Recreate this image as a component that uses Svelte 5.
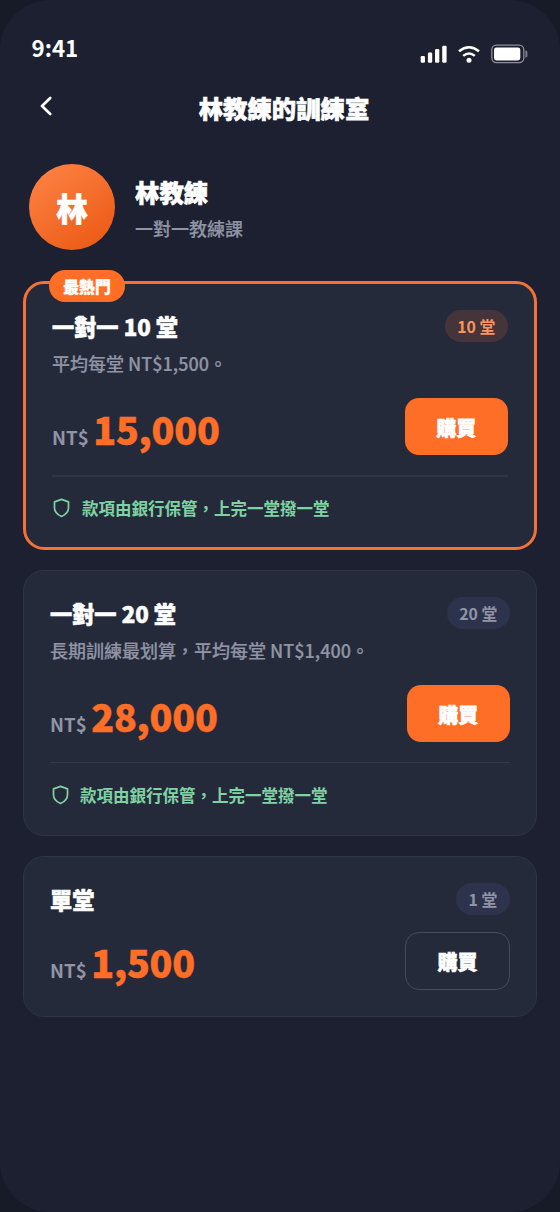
<script>
  const plans = [
    { title: '一對一 10 堂', count: '10 堂', desc: '平均每堂 NT$1,500。', price: '15,000', safe: true, hot: true },
    { title: '一對一 20 堂', count: '20 堂', desc: '長期訓練最划算，平均每堂 NT$1,400。', price: '28,000', safe: true },
    { title: '單堂', count: '1 堂', price: '1,500', outline: true }
  ];
</script>

<main class="screen" lang="zh-Hant">
  <div class="status">
    <span class="time">9:41</span>
    <div class="signals">
      <svg class="cell" width="27" height="18" viewBox="0 0 27 18" fill="#fff">
        <rect x="0.7" y="11" width="4.3" height="6.8" rx="1.2" />
        <rect x="7.9" y="7.6" width="4.3" height="10.2" rx="1.2" />
        <rect x="15" y="4" width="4.3" height="13.8" rx="1.2" />
        <rect x="22.2" y="0.8" width="4.4" height="17" rx="1.2" />
      </svg>
      <svg class="wifi" width="22" height="18" viewBox="0 0 22 18" fill="none" stroke="#fff" stroke-width="2.5">
        <path d="M1 6.3Q11-1.8 21 6.3" />
        <path d="M5.2 10.9Q11 6 16.8 10.9" />
        <circle cx="11" cy="15.2" r="2.5" fill="#fff" stroke="none" />
      </svg>
      <svg class="battery" width="37" height="20" viewBox="0 0 37 20">
        <rect x="0.8" y="1.2" width="32" height="17.4" rx="4.5" fill="none" stroke="#8c8f9a" stroke-width="1.3" />
        <rect x="3" y="3.4" width="26.3" height="13" rx="2.4" fill="#fff" />
        <path d="M34.3 6.5h.6q1.5 0 1.5 1.5v4q0 1.5-1.5 1.5h-.6z" fill="#777a86" />
      </svg>
    </div>
  </div>

  <header class="nav">
    <button class="back" aria-label="返回">
      <svg width="12" height="20" viewBox="0 0 12 20" fill="none" stroke="#fff" stroke-width="2.7" stroke-linecap="round" stroke-linejoin="round"><path d="M10.2 2L2 10l8.2 8" /></svg>
    </button>
    <h1>林教練的訓練室</h1>
  </header>

  <section class="coach">
    <div class="avatar">林</div>
    <div class="who">
      <div class="name">林教練</div>
      <div class="role">一對一教練課</div>
    </div>
  </section>

  <section class="plans">
    {#each plans as p}
      <article class="card" class:hot={p.hot} class:single={p.outline}>
        {#if p.hot}<span class="ribbon">最熱門</span>{/if}
        <div class="head">
          <h2>{p.title}</h2>
          <span class="count">{p.count}</span>
        </div>
        {#if p.desc}<p class="desc">{p.desc}</p>{/if}
        <div class="buy">
          <div class="price"><span class="cur">NT$</span><span class="num">{p.price}</span></div>
          <button class="btn" class:outline={p.outline}>購買</button>
        </div>
        {#if p.safe}
          <div class="safe">
            <svg width="17" height="20" viewBox="0 0 17 20" fill="none" stroke="#7fd3a3" stroke-width="1.7" stroke-linejoin="round"><path d="M8.5 1.4l7 2.5v5.8c0 4-2.7 6.9-7 8.8-4.3-1.9-7-4.8-7-8.8V3.9z" /></svg>
            <span>款項由銀行保管，上完一堂撥一堂</span>
          </div>
        {/if}
      </article>
    {/each}
  </section>
</main>

<style>
  :global(body) { margin: 0; background: #171b27; }
  * { box-sizing: border-box; }
  .screen {
    height: 1212px;
    overflow: hidden;
    background: #1d2030;
    border-radius: 50px;
    font-family: "Noto Sans CJK TC", sans-serif;
    color: #fff;
    display: flex;
    flex-direction: column;
  }
  h1, h2, p { margin: 0; }
  button { font: inherit; color: inherit; border: 0; background: none; padding: 0; }
  svg { display: block; flex: none; }
  h1, h2, .name, .ribbon, .btn { -webkit-text-stroke: 0.6px currentColor; }
  .status { height: 70px; padding: 31px 32px 0 31.5px; display: flex; justify-content: space-between; flex: none; }
  .time { font-size: 22.3px; line-height: 32px; font-weight: 700; }
  .signals { display: flex; align-items: center; height: 46px; gap: 11px; }
  .nav { height: 76px; flex: none; display: grid; grid-template-columns: 60px 1fr 52px; align-items: center; }
  .back { display: flex; justify-content: flex-end; padding-right: 8px; margin-top: -4px; }
  h1 { text-align: center; font-size: 24.4px; line-height: 36px; font-weight: 900; }
  .coach { display: flex; align-items: center; height: 86px; margin: 18px 29px 0; gap: 20px; flex: none; }
  .avatar {
    width: 86px; height: 86px; border-radius: 50%;
    background: linear-gradient(145deg, #ff8548, #e9560f);
    display: grid; place-items: center; font-size: 31.5px; font-weight: 900; line-height: 40px;
    -webkit-text-stroke: 0.6px currentColor;
  }
  .name { font-size: 24.4px; line-height: 36px; font-weight: 900; }
  .role { font-size: 18px; line-height: 26px; font-weight: 500; color: #9094a4; margin-top: 5px; -webkit-text-stroke: 0.2px currentColor; }
  .plans { display: flex; flex-direction: column; gap: 20px; margin: 31px 23px 0; }
  .card {
    position: relative;
    background: #252a3b; border: 1.4px solid #303445; border-radius: 21px;
    height: 266px; padding: 26px 26px 0;
    display: flex; flex-direction: column;
  }
  .card.hot { border: 3px solid #f67135; height: 269px; }
  .card.single { height: 161px; }
  .ribbon {
    position: absolute; left: 23px; top: -14px; height: 32px; width: 76px;
    border-radius: 16px; background: #ff6e27;
    font-size: 15.8px; font-weight: 900; line-height: 34px; text-align: center;
    -webkit-text-stroke-width: 0.35px;
  }
  .head { display: flex; justify-content: space-between; height: 34px; }
  h2 { font-size: 22.2px; line-height: 32px; font-weight: 900; }
  .count {
    height: 32px; border-radius: 16px; padding: 0 12.7px;
    font-size: 15.8px; line-height: 33px; font-weight: 700;
    background: #2d334d; color: #9195a6;
  }
  .hot .count { background: #45343a; color: #fa9560; }
  .desc { font-size: 18px; line-height: 26px; margin-top: 6px; font-weight: 500; color: #9094a4; -webkit-text-stroke: 0.2px currentColor; }
  .buy { display: flex; justify-content: space-between; margin-top: 22px; height: 57px; }
  .single .buy { margin-top: 15px; height: 58px; }
  .price { display: flex; align-items: baseline; gap: 4.5px; line-height: 62px; }
  .single .price { line-height: 60px; }
  .cur { font-size: 18.7px; font-weight: 700; color: #9094a4; }
  .num { font-size: 37.6px; font-weight: 900; color: #ff6e27; letter-spacing: -0.2px; -webkit-text-stroke: 0.5px currentColor; }
  .btn {
    width: 103.5px; height: 57px; border-radius: 14px; background: #ff6e27;
    font-size: 20px; font-weight: 900; line-height: 59px;
  }
  .btn.outline { background: transparent; border: 1.4px solid #484c5a; width: 105px; height: 58px; line-height: 58px; }
  .safe {
    display: flex; align-items: center; gap: 11.5px; margin-top: 20px; padding-left: 1.5px;
    border-top: 1.4px solid #343949; height: 64px;
    font-size: 16.5px; font-weight: 700; color: #7fd3a3;
  }
  .hot .safe { border-top: 2px solid #313646; height: 63px; gap: 12px; padding-left: 1px; }
</style>
